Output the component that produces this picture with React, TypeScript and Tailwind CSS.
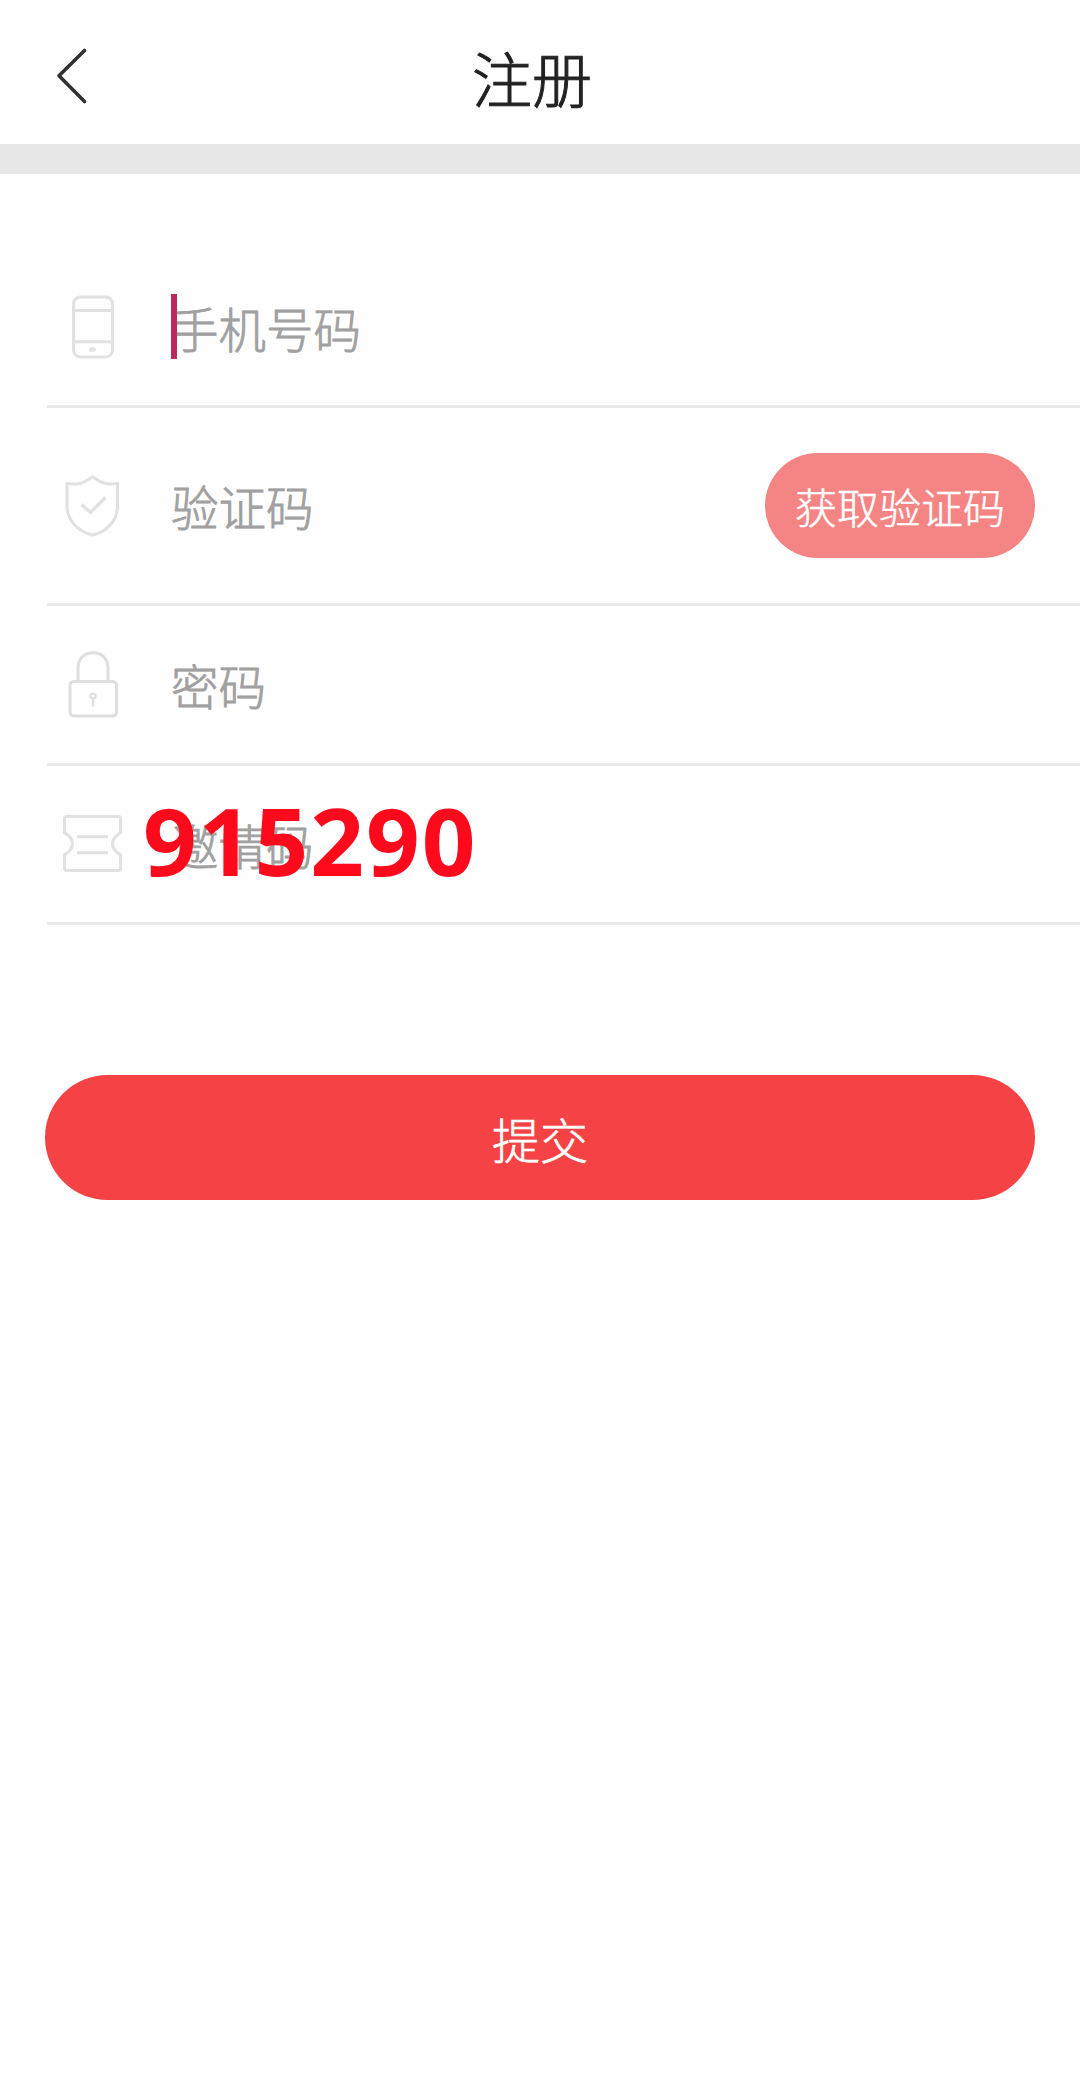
import React from "react";

const PhoneIcon = () => (
  <svg width="64" height="70" viewBox="0 0 64 70" fill="none" stroke="#e1e1e1" strokeWidth="3" className="shrink-0">
    <rect x="13.5" y="5" width="39" height="60" rx="7" />
    <path d="M14 18.5H53M14 49.7H53" />
    <rect x="30" y="56" width="5" height="3" rx="1" strokeWidth="1.5" fill="#e1e1e1" />
  </svg>
);

const ShieldIcon = () => (
  <svg width="64" height="70" viewBox="0 0 64 70" fill="none" stroke="#e1e1e1" strokeWidth="3" className="shrink-0">
    <path d="M32.5 6L24 11Q19 13.5 15 13L7 12.5V35C7 50 19 61 32.5 64C46.5 61 57.5 50 57.5 35V12.5L50 13Q46 13 41 11Z" />
    <path d="M21.5 33.5L30.5 41.5L45.5 26.5" strokeWidth="3.4" />
  </svg>
);

const LockIcon = () => (
  <svg width="64" height="70" viewBox="0 0 64 70" fill="none" stroke="#dedede" strokeWidth="3" className="shrink-0">
    <rect x="10" y="31.5" width="46.5" height="34.5" rx="4" />
    <path d="M18 31.5V18C18 8 25 2.8 33 2.8C41 2.8 48 8 48 18V31.5" />
    <circle cx="33" cy="46" r="2.6" strokeWidth="2" />
    <path d="M33 48V56.5" strokeWidth="2.4" />
  </svg>
);

const TicketIcon = () => (
  <svg width="64" height="70" viewBox="0 0 64 70" fill="none" stroke="#e1e1e1" strokeWidth="3" strokeLinejoin="round" className="shrink-0">
    <path d="M6.5 7.5H58.5Q60.5 7.5 60.5 9.5V23.5L58 25.5C54.500 28 52.5 31 52.5 34.7C52.5 38.5 54.5 41.5 58 44L60.5 46V59.5Q60.5 61.5 58.5 61.5H6.5Q4.5 61.5 4.5 59.5V46L7 44C10.5 41.5 12.5 38.5 12.5 34.7C12.5 31 10.5 28 7 25.5L4.5 23.5V9.5Q4.5 7.5 6.5 7.5Z" />
    <path d="M17 27.7H48M17 43.7H48" />
  </svg>
);

type FieldProps = {
  icon: React.ReactNode;
  label: string;
  className: string;
  overlay?: React.ReactNode;
  children?: React.ReactNode;
};

const Field = ({ icon, label, className, overlay, children }: FieldProps) => (
  <div className={`ml-[47px] flex items-center border-b-[3px] border-[#e8e8e8] pl-[13px] pr-[45px] ${className}`}>
    {icon}
    <div className="relative ml-[47px] flex flex-1 items-center">
      <span className="whitespace-nowrap text-[47.5px] font-light leading-[65px] text-[#a0a0a0] [-webkit-text-stroke:0.8px_#a0a0a0]">
        {label}
      </span>
      {overlay}
    </div>
    {children}
  </div>
);

export default function App() {
  return (
    <main className="min-h-[2093px] w-[1080px] bg-[#fefefe] font-['Noto_Sans_CJK_SC',sans-serif]">
      <header className="grid h-[174px] grid-cols-[120px_1fr_136px] items-center border-b-[30px] border-[#e7e7e7]">
        <button aria-label="返回" className="pl-[54px] pt-2">
          <svg width="36" height="60" viewBox="0 0 36 60" fill="none" stroke="#303133" strokeWidth="3.6" strokeLinecap="round" strokeLinejoin="round">
            <path d="M30.5 4.5L5 29.7L30.5 55.5" />
          </svg>
        </button>
        <h1 className="pt-[9px] text-center text-[60px] font-light leading-[80px] text-[#222222] [-webkit-text-stroke:1px_#222222]">
          注册
        </h1>
      </header>

      <form>
        <Field
          icon={<PhoneIcon />}
          label="手机号码"
          className="h-[234px] pt-[75px]"
          overlay={<span className="absolute -top-px left-0 h-[65px] w-[6px] bg-[#bb2c5e]" />}
        />
        <Field icon={<ShieldIcon />} label="验证码" className="h-[198px]">
          <button
            type="button"
            className="h-[105px] w-[270px] rounded-full bg-[#f48584] text-[42px] font-light leading-none text-white [-webkit-text-stroke:0.5px_white]"
          >
            获取验证码
          </button>
        </Field>
        <Field icon={<LockIcon />} label="密码" className="h-[160px]" />
        <Field
          icon={<TicketIcon />}
          label="邀请码"
          className="h-[159px]"
          overlay={
            <span className="absolute -left-[28px] -top-[37px] font-['Open_Sans'] text-[94px] font-bold leading-[130px] tracking-[2px] text-[#ff0a1c]">
              915290
            </span>
          }
        />
        <div className="px-[45px] pt-[150px]">
          <button
            type="button"
            className="h-[125px] w-full rounded-full bg-[#f54345] text-[48px] font-light leading-none text-white [-webkit-text-stroke:0.6px_white]"
          >
            提交
          </button>
        </div>
      </form>
    </main>
  );
}
